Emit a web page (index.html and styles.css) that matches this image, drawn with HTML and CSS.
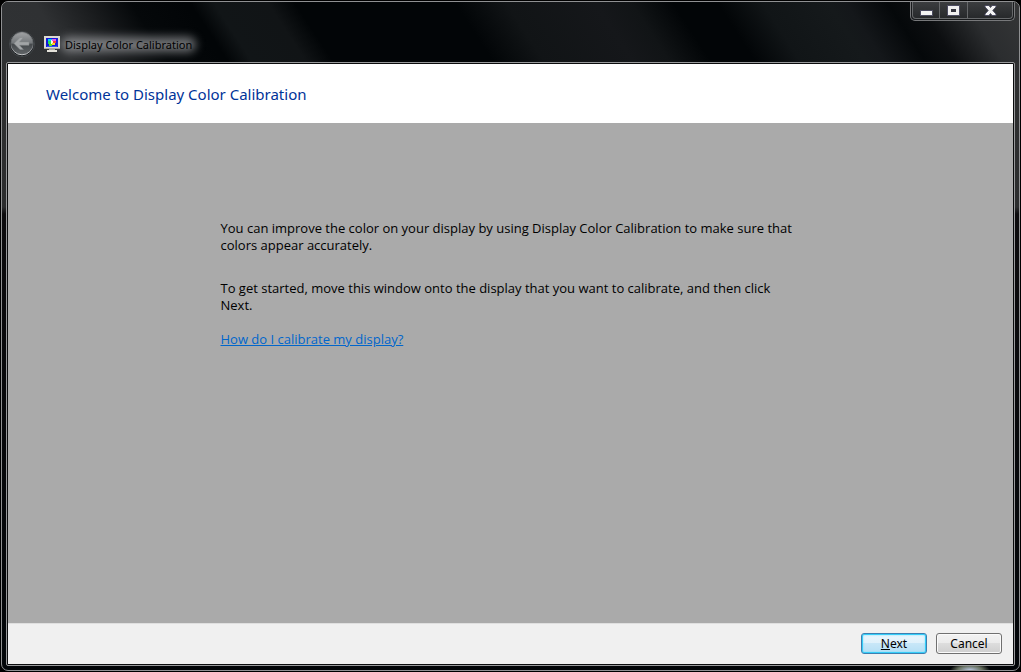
FILE: index.html
```html
<!DOCTYPE html>
<html lang="en">
<head>
<meta charset="utf-8">
<title>Display Color Calibration</title>
<link rel="stylesheet" href="styles.css">
</head>
<body>
<div class="window">
  <header class="titlebar">
    <div class="caption">
      <button class="back" type="button" aria-label="Back">
        <svg width="26" height="26" viewBox="0 0 26 26" aria-hidden="true">
          <defs>
            <linearGradient id="disc" x1="0" y1="0" x2="0" y2="1">
              <stop offset="0" stop-color="#a0a2a4"/>
              <stop offset=".48" stop-color="#73777a"/>
              <stop offset=".52" stop-color="#44484b"/>
              <stop offset="1" stop-color="#626669"/>
            </linearGradient>
            <linearGradient id="ring" x1="0" y1="0" x2="0" y2="1">
              <stop offset="0" stop-color="#8a8c8e"/>
              <stop offset=".5" stop-color="#5c6063"/>
              <stop offset="1" stop-color="#c8cacc"/>
            </linearGradient>
          </defs>
          <circle cx="13" cy="13" r="12.5" fill="#15181b" stroke="#54585b" stroke-opacity=".7"/>
          <circle cx="13" cy="12.6" r="11.2" fill="url(#disc)" stroke="url(#ring)"/>
          <path d="M5 12.500 11 6.500h3.400L10.500 11h9.500v3.200h-9.500l3.900 4.300H11z" fill="#a2a5a7" stroke="#85888a" stroke-width=".5"/>
        </svg>
      </button>
      <svg class="app-icon" width="16" height="16" viewBox="0 0 16 16" aria-hidden="true">
        <path d="M0 0h16v13H0z" fill="#dcdad2"/>
        <path d="M0 12h16v1H0z" fill="#aaa89f"/>
        <path d="M2 2h12v9H2z" fill="#1218d8"/>
        <path d="M3 10h10v1H3z" fill="#2a55f0"/>
        <path d="M4 3h4v3H4z" fill="#00d8e8"/>
        <path d="M4 5h3v3H4z" fill="#20e060"/>
        <path d="M5 7h3v3H5z" fill="#58e020"/>
        <path d="M7 4h1v4H7z" fill="#e8fff0"/>
        <path d="M8 3h4v2H8z" fill="#f050e8"/>
        <path d="M9 5h3v2H9z" fill="#ff3838"/>
        <path d="M8 7h3v2H8z" fill="#ffd820"/>
        <path d="M8 5h1v2H8z" fill="#fff0e0"/>
        <path d="M5 13h6v1H5z" fill="#a8a69e"/>
        <path d="M3 14h10v2H3z" fill="#e4e2da"/>
      </svg>
      <span class="title">Display Color Calibration</span>
    </div>
    <div class="controls">
      <button class="control" type="button" aria-label="Minimize">
        <svg width="13" height="11" viewBox="0 0 13 11" aria-hidden="true"><path d="M.5 5.500h12v5H.5z" fill="#f4f4f4" stroke="#4b4b60"/></svg>
      </button>
      <button class="control" type="button" aria-label="Maximize">
        <svg width="13" height="11" viewBox="0 0 13 11" aria-hidden="true"><path d="M.5 .5h12v10H.5z" fill="#f0f0f0" stroke="#4b4b60"/><path d="M4 4h5v3H4z" fill="#34343e"/></svg>
      </button>
      <button class="control close" type="button" aria-label="Close">
        <svg width="13" height="11" viewBox="0 0 13 11" aria-hidden="true"><path d="M1 .5h4l1.500 2 1.500-2h4v1.500L8.800 5.500 12 9v1.500H8L6.500 8.500 5 10.500H1V9l3.200-3.500L1 2z" fill="#f4f4f4" stroke="#4b4b60"/></svg>
      </button>
    </div>
  </header>
  <div class="frame">
    <div class="heading"><h1>Welcome to Display Color Calibration</h1></div>
    <main class="content">
      <div class="copy">
        <p class="intro">You can improve the color on your display by using Display Color Calibration to make sure that colors appear accurately.</p>
        <p class="start">To get started, move this window onto the display that you want to calibrate, and then click Next.</p>
        <a class="help" href="#help">How do I calibrate my display?</a>
      </div>
    </main>
    <footer class="actions">
      <button class="btn primary" type="button" accesskey="n"><u>N</u>ext</button>
      <button class="btn" type="button">Cancel</button>
    </footer>
  </div>
</div>
</body>
</html>
```
FILE: styles.css
```css
* { box-sizing: border-box; }

body {
  margin: 0;
  padding: 1px;
  height: 100vh;
  display: flex;
  background: #000;
  color: #000;
  font-family: "Noto Sans", "Open Sans", sans-serif;
  font-size: 12px;
  line-height: 17px;
}

button { font: inherit; }

.window {
  flex: 1;
  display: flex;
  flex-direction: column;
  padding: 0 4px 4px;
  border: 1px solid #8f9092;
  border-radius: 7px;
  overflow: hidden;
  background:
    radial-gradient(ellipse 20px 7px at calc(100% - 49px) 100%, #b8c6e0, #66705f 60%, transparent) no-repeat,
    linear-gradient(#303132 0, #2c2d2e 205px, #0c0b0d 212px, #020508 100%);
}

/* Glass reflections run diagonally across the title bar. */
.titlebar {
  display: flex;
  justify-content: space-between;
  align-items: flex-start;
  height: 60px;
  margin: 0 -4px;
  background: linear-gradient(57deg,
    #303234 0, #2f3133 60px, #1b1d1f 100px, #05080a 140px, #020507 185px,
    #020507 190px, #111517 210px, #111416 255px, #020507 278px,
    #020507 412px, #111416 455px, #15171a 530px, #111416 560px,
    #020507 595px, #020507 632px, #111517 670px, #15191b 725px,
    #14171a 740px, #05080a 775px, #0c0e10 800px, #2b2d2f 840px, #353637 100%);
}

.caption {
  display: flex;
  align-items: center;
  padding: 29px 0 0 7px;
}

.back {
  display: flex;
  margin-right: 9px;
  padding: 0;
  border: 0;
  background: none;
}

.title {
  position: relative;
  z-index: 0;
  margin-left: 5px;
  font-size: 11px;
}

.title::before {
  content: "";
  position: absolute;
  z-index: -1;
  inset: 1px -4px;
  border-radius: 8px;
  background: rgba(200, 203, 205, .55);
  filter: blur(5px);
}

.controls {
  display: flex;
  margin-right: 4px;
  padding: 0 1px 1px;
  border: 1px solid #77787a;
  border-top: 0;
  border-radius: 0 0 5px 5px;
  background: #191b1d;
}

.control {
  display: flex;
  align-items: center;
  justify-content: center;
  width: 28px;
  height: 17px;
  padding: 0;
  border: 1px solid #66686a;
  border-top: 0;
  background: linear-gradient(#3b3d3f, #27292b);
}

.control:first-child { border-radius: 0 0 0 4px; }
.control + .control { border-left: 0; }
.close { width: 45px; border-radius: 0 0 4px 0; }

.frame {
  flex: 1;
  display: flex;
  flex-direction: column;
  border: 1px solid #98999b;
  border-radius: 2px;
  padding: 1px;
  background: #0b0c0d;
}

.heading {
  padding: 20px 38px 19px;
  background: #fff;
}

h1 {
  margin: 0;
  color: #003399;
  font-size: 15px;
  font-weight: 400;
  line-height: 20px;
}

.content {
  flex: 1;
  display: flex;
  justify-content: center;
  padding: 97px 24px 24px;
  background: #aaa;
}

.copy {
  width: 580px;
  font-family: "Open Sans", "Noto Sans", sans-serif;
  font-size: 13px;
}

.copy p { margin: 0; }
.copy .intro { margin-bottom: 26px; }
.copy .start { margin-bottom: 17px; }
.help { color: #0066cc; }

.actions {
  display: flex;
  justify-content: flex-end;
  gap: 9px;
  padding: 9px 11px 10px;
  border-top: 1px solid #dfdfdf;
  background: #f0f0f0;
}

.btn {
  width: 66px;
  height: 21px;
  padding: 0;
  border: 1px solid #707070;
  border-radius: 3px;
  background: linear-gradient(#f2f2f2, #ebebeb 50%, #dddddd 50%, #cfcfcf);
  box-shadow: inset 0 0 0 1px #fafafa;
  color: #000;
  line-height: 17px;
}

.primary {
  border-color: #3c7fb1;
  background: linear-gradient(#ebf6fc, #dff1fb 50%, #c8e7f8 50%, #b5dff5);
  box-shadow: inset 0 0 0 1px #35cdf8, inset 0 0 2px 1px #79ddf9;
}
```
